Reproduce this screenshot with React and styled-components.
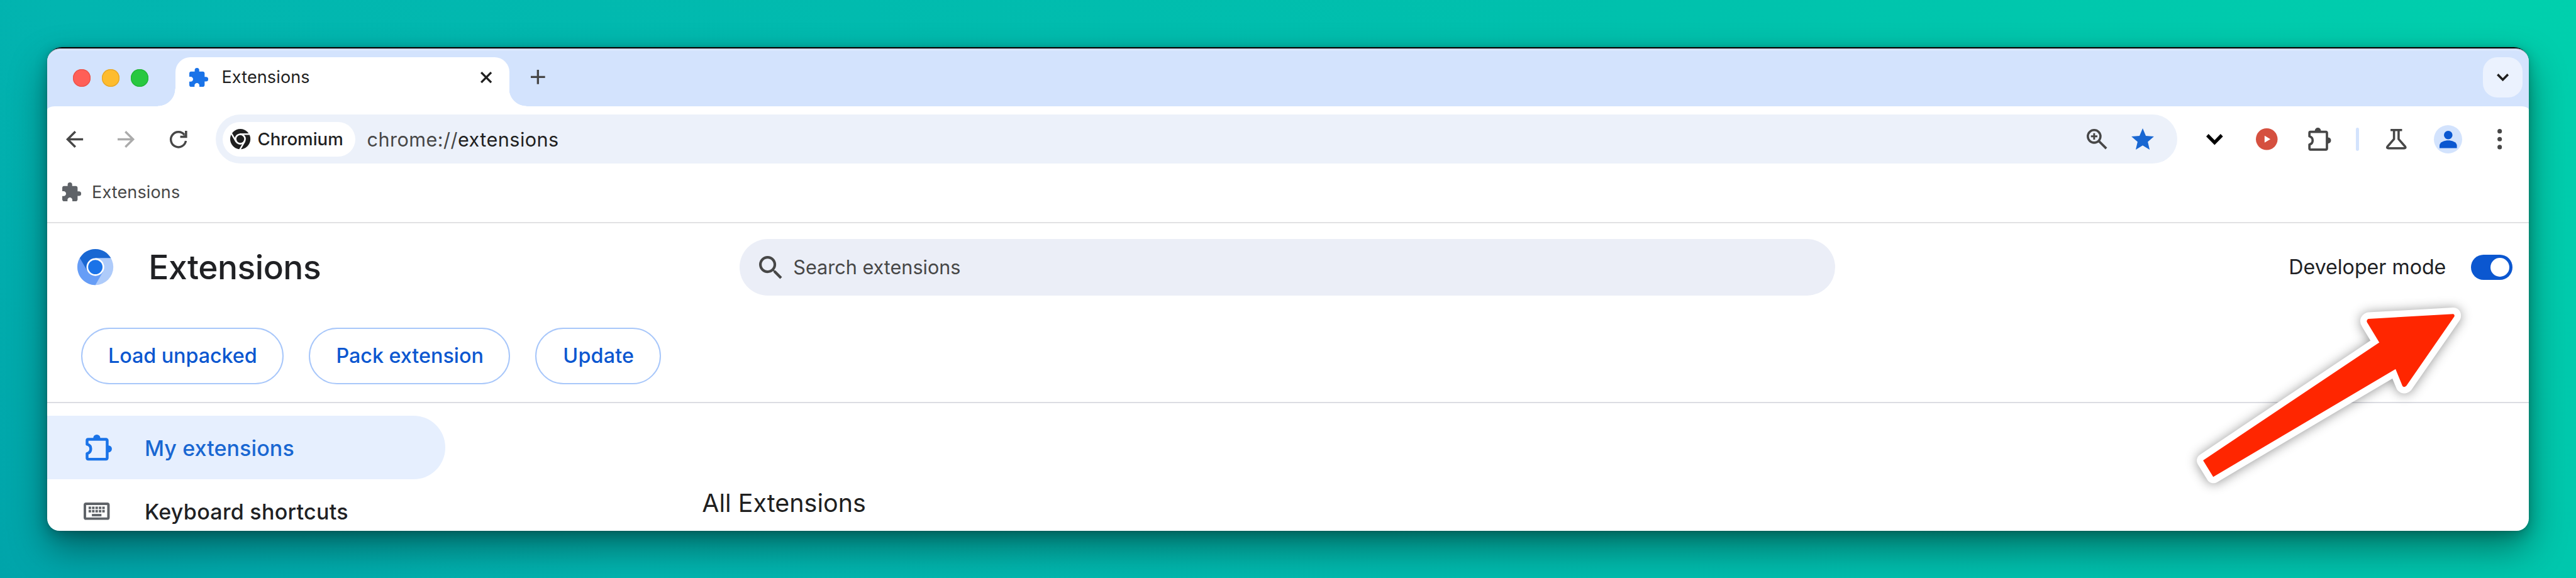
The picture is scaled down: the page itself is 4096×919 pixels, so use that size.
import React from "react";
import styled, { createGlobalStyle, css } from "styled-components";

const GlobalStyle = createGlobalStyle`
  *, *::before, *::after { box-sizing: border-box; }
  body {
    margin: 0;
    overflow: hidden;
    font-family: Inter, "Liberation Sans", sans-serif;
    color: #1f1f1f;
  }
  svg { display: block; flex: none; overflow: visible; }
`;

const Desktop = styled.main`
  zoom: 0.98652;
  width: 4152px;
  height: 932px;
  padding: 76px;
  overflow: hidden;
  background: linear-gradient(45deg, #00a4aa 0%, #02b5b0 20%, #00c1ad 70%, #00d0ad 100%);
`;

const BrowserWindow = styled.div`
  position: relative;
  display: flex;
  flex-direction: column;
  width: 4000px;
  height: 780px;
  padding-top: 2px;
  border-radius: 24px 24px 20px 20px;
  background: linear-gradient(#000 10px, #d3e3fd 10px, #d3e3fd 60px, #fff 60px);
  box-shadow:
    0 0 4px rgba(0, 0, 0, 0.2),
    0 6px 20px rgba(0, 0, 0, 0.22),
    0 28px 60px rgba(0, 0, 0, 0.4);
`;

const Label = styled.span`
  padding: 1.2px 0 0 ${(p) => (p.$joined ? 0 : 1.1)}px;
  font-size: ${(p) => p.$size}px;
  font-weight: ${(p) => p.$weight || 400};
  letter-spacing: ${(p) => p.$track || 0}px;
  line-height: 1.2;
  color: ${(p) => p.$color || "inherit"};
  white-space: pre;
`;

/* ---------- tab strip ---------- */

const TabStrip = styled.div`
  display: flex;
  flex: none;
  height: 93px;
  padding: 14px 9.7px 0 42px;
  border-radius: 21px 21px 0 0;
  background: #d3e3fd;
  box-shadow: inset 0 1.6px 0 rgba(150, 160, 190, 0.35), inset 0 3px 1px rgba(255, 255, 255, 0.35);
`;

const TrafficLights = styled.div`
  display: flex;
  gap: 18.4px;
  margin: 20px 44px 0 0;
`;

const Light = styled.span`
  width: 28px;
  height: 28px;
  border-radius: 50%;
  background: ${(p) => p.$fill};
  box-shadow: inset 0 0 0 1.2px ${(p) => p.$edge};
`;

const flare = css`
  content: "";
  position: absolute;
  bottom: 0;
  width: 28px;
  height: 28px;
`;

const Tab = styled.div`
  position: relative;
  display: flex;
  align-items: center;
  width: 538px;
  height: 79px;
  padding: 0 27.3px 15px 22px;
  border-radius: 24px 24px 0 0;
  background: #fff;
  &::before {
    ${flare}
    left: -28px;
    background: radial-gradient(circle at 0 0, transparent 27.5px, #fff 28.2px);
  }
  &::after {
    ${flare}
    right: -28px;
    background: radial-gradient(circle at 100% 0, transparent 27.5px, #fff 28.2px);
  }
  svg:first-child { margin: 2px 21px 0 0; }
  svg:last-child { margin: 2px 0 0 auto; }
`;

const NewTab = styled.div`
  margin: 20.8px 0 0 34.8px;
`;

const TabSearch = styled.div`
  display: flex;
  align-items: center;
  justify-content: center;
  width: 64.5px;
  height: 65px;
  margin-left: auto;
  border-radius: 23px;
  background: #ebf2fe;
`;

/* ---------- toolbar ---------- */

const ToolbarBack = styled.div`
  flex: none;
  background: #d3e3fd;
`;

const Toolbar = styled.div`
  display: flex;
  align-items: center;
  height: 107px;
  padding: 0 43px 0 30.5px;
  border-radius: 12px 12px 0 0 / 6px 6px 0 0;
  background: #fff;
`;

const NavIcons = styled.div`
  display: flex;
  align-items: center;
  gap: 56px;
  width: 241.5px;
`;

const Omnibox = styled.div`
  display: flex;
  align-items: center;
  width: 3161.5px;
  height: 79px;
  padding: 0 37.5px 0 11px;
  border-radius: 40px;
  background: #ecf1fa;
`;

const SiteChip = styled.div`
  display: flex;
  align-items: center;
  gap: 10.4px;
  width: 214px;
  height: 56px;
  margin-right: 17.5px;
  padding-left: 12px;
  border-radius: 28px;
  background: #fff;
`;

const OmniboxActions = styled.div`
  display: flex;
  align-items: center;
  gap: 39.5px;
  margin-left: auto;
`;

const ToolbarActions = styled.div`
  display: flex;
  align-items: center;
  margin-left: 46.5px;
`;

const Action = styled.span`
  margin-left: ${(p) => p.$before}px;
`;

const Divider = styled.span`
  width: 5px;
  height: 37px;
  margin-left: 39.5px;
  border-radius: 2.5px;
  background: #d3e3fd;
`;

const Avatar = styled.span`
  display: flex;
  align-items: center;
  justify-content: center;
  width: 46.5px;
  height: 46.5px;
  margin-left: 43.5px;
  border-radius: 50%;
  background: #d3e3fd;
`;

const BookmarksBar = styled.div`
  display: flex;
  align-items: center;
  flex: none;
  gap: 16.5px;
  height: 81.4px;
  padding: 0 0 16px 24px;
  border-bottom: 2.1px solid #e1e1e3;
`;

/* ---------- extensions page ---------- */

const PageHeader = styled.header`
  display: flex;
  align-items: center;
  flex: none;
  height: 142.5px;
  padding: 0 26px 0 48.5px;
`;

const Brand = styled.div`
  display: flex;
  align-items: center;
  gap: 56px;
  width: 1067.5px;
`;

const SearchField = styled.div`
  display: flex;
  align-items: center;
  gap: 17.5px;
  width: 1766px;
  height: 91px;
  padding-left: 31px;
  border-radius: 46px;
  background: #ebeef7;
`;

const DeveloperMode = styled.div`
  display: flex;
  align-items: center;
  gap: 40px;
  margin-left: auto;
`;

const Toggle = styled.span`
  display: flex;
  align-items: center;
  justify-content: flex-end;
  width: 67.5px;
  height: 41px;
  padding-right: 5px;
  border-radius: 21px;
  background: #0b57d0;
`;

const Knob = styled.span`
  width: 31px;
  height: 31px;
  border-radius: 50%;
  background: #fff;
`;

const ButtonRow = styled.div`
  display: flex;
  flex: none;
  gap: 40.5px;
  height: 148.4px;
  padding: 26px 0 0 54.5px;
  border-bottom: 2.1px solid #dcdde3;
`;

const OutlineButton = styled.button`
  width: ${(p) => p.$width}px;
  height: 91.5px;
  padding: 2.4px 0 0;
  border: 2.1px solid #a8c7fa;
  border-radius: 46px;
  background: transparent;
  color: #0b57d0;
  font: inherit;
`;

const PageBody = styled.div`
  display: flex;
  flex: 1;
  min-height: 0;
  padding-top: 20px;
  overflow: hidden;
  border-radius: 0 0 20px 20px;
`;

const SideNav = styled.nav`
  width: 1054.5px;
`;

const NavItem = styled.a`
  display: flex;
  align-items: center;
  width: 642px;
  height: 102.5px;
  border-radius: 0 51px 51px 0;
  background: ${(p) => (p.$active ? "#e6effe" : "transparent")};
  color: ${(p) => (p.$active ? "#1967d2" : "#202124")};
  span { padding-top: 2.6px; }
`;

const NavGlyph = styled.i`
  width: 156px;
  padding-left: ${(p) => p.$inset}px;
`;

const SectionTitle = styled.h2`
  margin: 117.5px 0 0;
  font-weight: 400;
  line-height: 48px;
`;

/* ---------- pointer arrow lying over the page ---------- */

const ArrowOverlay = styled.svg`
  position: absolute;
  left: 3464px;
  top: 419px;
  filter: drop-shadow(0 2px 9px rgba(0, 0, 0, 0.42));
`;

/* ---------- icons ---------- */

const PuzzleFilled = ({ size, color }) => (
  <svg width={size} height={size} viewBox="2 1 21 21" fill={color}>
    <path d="M20.5 11H19V7c0-1.1-.9-2-2-2h-4V3.5a2.5 2.5 0 0 0-5 0V5H4c-1.1 0-1.99.9-1.99 2v3.8H3.5c1.49 0 2.7 1.21 2.7 2.7s-1.21 2.7-2.7 2.7H2V20c0 1.1.9 2 2 2h3.8v-1.5c0-1.49 1.21-2.7 2.7-2.7s2.7 1.21 2.7 2.7V22H17c1.1 0 2-.9 2-2v-4h1.5a2.5 2.5 0 0 0 0-5z" />
  </svg>
);

const PuzzleOutline = ({ width, height, color, stroke }) => (
  <svg width={width} height={height} viewBox="0 0 37.5 37.5" preserveAspectRatio="none">
    <path
      d="M3.8 6.8h25.4a1.6 1.6 0 0 1 1.6 1.6v25.4a1.6 1.6 0 0 1-1.6 1.6H3.8a1.6 1.6 0 0 1-1.6-1.6v-6.6c7-1.8 7-11.4 0-13.2V8.4a1.6 1.6 0 0 1 1.6-1.6z"
      fill="none"
      stroke={color}
      strokeWidth={stroke}
      strokeLinejoin="round"
    />
    <path d="M11 6V5a5 5 0 0 1 10 0v1zM31.6 15.6h.9a5 5 0 0 1 0 10h-.9z" fill={color} />
  </svg>
);

const CloseIcon = () => (
  <svg width="18.5" height="18.5" viewBox="0 0 18.5 18.5" stroke="#1f1f1f" strokeWidth="3.4">
    <path d="M1.2 1.2l16.1 16.1M17.3 1.2L1.2 17.3" />
  </svg>
);

const PlusIcon = () => (
  <svg width="23" height="23" viewBox="0 0 23 23" stroke="#474747" strokeWidth="3.4">
    <path d="M11.5 0v23M0 11.5h23" />
  </svg>
);

const Chevron = ({ width, height, stroke, color }) => (
  <svg width={width} height={height} viewBox="0 0 20 12" preserveAspectRatio="none" fill="none">
    <path d="M1.4 1.4L10 9.8l8.6-8.4" stroke={color} strokeWidth={stroke} />
  </svg>
);

const BackArrow = ({ color, flip }) => (
  <svg width="27.5" height="27.5" viewBox="0 0 27.5 27.5" fill="none" stroke={color} strokeWidth="3.5">
    <g transform={flip ? "translate(27.5 0) scale(-1 1)" : undefined}>
      <path d="M27.5 13.75H3M15 1.3L2.5 13.75 15 26.2" />
    </g>
  </svg>
);

const ReloadIcon = () => (
  <svg width="28" height="28" viewBox="0 0 28 28">
    <path d="M25.9 16.2A12.2 12.2 0 1 1 23.6 6.6" fill="none" stroke="#474747" strokeWidth="3.5" />
    <path d="M24.4 0H28v11.3H16.8V7.8h4.6l3-1z" fill="#474747" />
  </svg>
);

const ChromeGlyph = () => (
  <svg width="32.6" height="32.6" viewBox="0 0 32.6 32.6">
    <circle cx="16.3" cy="16.3" r="16.3" fill="#1f1f1f" />
    <circle cx="16.3" cy="16.3" r="9" fill="#fff" />
    <circle cx="16.3" cy="16.3" r="6.3" fill="#1f1f1f" />
    {[0, 120, 240].map((deg) => (
      <path
        key={deg}
        d="M15.5 8.4H32"
        stroke="#fff"
        strokeWidth="2.4"
        transform={`rotate(${deg} 16.3 16.3)`}
      />
    ))}
  </svg>
);

const ChromiumLogo = () => (
  <svg width="58" height="58" viewBox="0 0 58 58">
    <circle cx="29" cy="29" r="29" fill="#aecbfa" />
    <path d="M3.9 14.5L16.44 36.25 29 29l12.56 7.25L29 58A29 29 0 0 1 3.9 14.5z" fill="#669df6" />
    <path d="M3.9 14.5a29 29 0 0 1 50.2 0H29V29l-12.56 7.25z" fill="#1967d2" />
    <circle cx="29" cy="29" r="14.3" fill="#fff" />
    <circle cx="29" cy="29" r="11.6" fill="#1a73e8" />
  </svg>
);

const ZoomIcon = () => (
  <svg width="33" height="33" viewBox="0 0 33 33" fill="none" stroke="#474747">
    <circle cx="12" cy="12" r="10.2" strokeWidth="3.6" />
    <path d="M19 19l12.6 12.6" strokeWidth="3.8" />
    <path d="M12 6.8v10.4M6.8 12h10.4" strokeWidth="3" />
  </svg>
);

const StarIcon = () => (
  <svg width="36.5" height="34.5" viewBox="2 2 20 19" fill="#1967d2">
    <path d="M12 17.27L18.18 21l-1.64-7.03L22 9.24l-7.19-.61L12 2 9.19 8.63 2 9.24l5.46 4.73L5.82 21z" />
  </svg>
);

const PlayBadge = () => (
  <svg width="35" height="35" viewBox="0 0 35 35">
    <circle cx="17.5" cy="17.5" r="17.5" fill="#d5503f" />
    <path d="M14 12l9.4 5.5L14 23z" fill="#fff" />
  </svg>
);

const FlaskIcon = () => (
  <svg width="33" height="33" viewBox="0 0 33 33" fill="none" stroke="#474747" strokeWidth="3.6">
    <path
      d="M7.2 1.8h18.6M12.8 1.8v14.6L2.3 28.4c-1.2 1.6-.4 2.8 1.3 2.8h25.8c1.7 0 2.5-1.2 1.3-2.8L20.2 16.4V1.8"
      strokeLinejoin="round"
    />
  </svg>
);

const PersonIcon = () => (
  <svg width="28" height="28" viewBox="0 0 28 28" fill="#0b57d0">
    <circle cx="14" cy="6.8" r="6.9" />
    <path d="M0 28v-4.3C0 18 8.6 15.4 14 15.4s14 2.6 14 8.3V28z" />
  </svg>
);

const MoreIcon = () => (
  <svg width="7.4" height="33" viewBox="0 0 7.4 33" fill="#474747">
    <circle cx="3.7" cy="3.7" r="3.6" />
    <circle cx="3.7" cy="16.5" r="3.6" />
    <circle cx="3.7" cy="29.3" r="3.6" />
  </svg>
);

const SearchIcon = () => (
  <svg width="37" height="37" viewBox="3 3 17.49 17.49" fill="#474747">
    <path d="M15.5 14h-.79l-.28-.27A6.471 6.471 0 0 0 16 9.5 6.5 6.5 0 1 0 9.5 16c1.61 0 3.09-.59 4.23-1.57l.27.28v.79l5 4.99L20.49 19l-4.99-5zm-6 0C7.01 14 5 11.99 5 9.5S7.01 5 9.5 5 14 7.01 14 9.5 11.99 14 9.5 14z" />
  </svg>
);

const KeyboardIcon = () => (
  <svg width="42" height="28" viewBox="0 0 42 28">
    <rect x="2" y="2" width="38" height="24" rx="2" fill="none" stroke="#5f6368" strokeWidth="4" />
    {[0, 1, 2, 3, 4].map((i) => (
      <g key={i} fill="#5f6368">
        <rect x={8 + i * 5.5} y="6.6" width="4" height="4" />
        <rect x={8 + i * 5.5} y="12" width="4" height="4" />
      </g>
    ))}
    <rect x="13.3" y="18.4" width="15.4" height="3.8" fill="#5f6368" />
  </svg>
);

const Arrow = () => {
  const shape =
    "M414.5 12.5L278 20.2Q274.6 22 277 25.4L296.5 57.6 12.5 247.7 27.9 272.6 321.9 98.7 333.5 127Q335.5 129 338 126.6L415 15.5Q416 13 414.5 12.5z";
  return (
    <ArrowOverlay width="430" height="290" viewBox="0 0 430 290">
      <path d={shape} fill="#fff" stroke="#fff" strokeWidth="23" strokeLinejoin="round" />
      <path d={shape} fill="#ff2600" stroke="#ff2600" strokeWidth="2" strokeLinejoin="round" />
    </ArrowOverlay>
  );
};

export default function App() {
  return (
    <Desktop>
      <GlobalStyle />
      <BrowserWindow>
        <TabStrip>
          <TrafficLights>
            <Light $fill="#ff5f57" $edge="#e9524a" />
            <Light $fill="#febc2e" $edge="#e5a425" />
            <Light $fill="#28c840" $edge="#22b437" />
          </TrafficLights>
          <Tab>
            <PuzzleFilled size={30.5} color="#1a73e8" />
            <Label $size={27.4} $track={0.12}>Extensions</Label>
            <CloseIcon />
          </Tab>
          <NewTab>
            <PlusIcon />
          </NewTab>
          <TabSearch>
            <Chevron width={19.5} height={12} stroke={3.6} color="#1f1f1f" />
          </TabSearch>
        </TabStrip>

        <ToolbarBack>
          <Toolbar>
            <NavIcons>
              <BackArrow color="#474747" />
              <BackArrow color="#ababab" flip />
              <ReloadIcon />
            </NavIcons>
            <Omnibox>
              <SiteChip>
                <ChromeGlyph />
                <Label $size={28} $weight={530}>Chromium</Label>
              </SiteChip>
              <Label $size={31} $track={0.46} $color="#474747">chrome://</Label>
              <Label $size={31} $track={0.46} $joined>extensions</Label>
              <OmniboxActions>
                <ZoomIcon />
                <StarIcon />
              </OmniboxActions>
            </Omnibox>
            <ToolbarActions>
              <Chevron width={27} height={17} stroke={4} color="#000" />
              <Action $before={53}>
                <PlayBadge />
              </Action>
              <Action $before={49.5}>
                <PuzzleOutline width={37} height={37.5} color="#474747" stroke={3.8} />
              </Action>
              <Divider />
              <Action $before={44}>
                <FlaskIcon />
              </Action>
              <Avatar>
                <PersonIcon />
              </Avatar>
              <Action $before={56}>
                <MoreIcon />
              </Action>
            </ToolbarActions>
          </Toolbar>
        </ToolbarBack>

        <BookmarksBar>
          <PuzzleFilled size={30.5} color="#5f6368" />
          <Label $size={27.4} $track={0.12} $color="#474747">Extensions</Label>
        </BookmarksBar>

        <PageHeader>
          <Brand>
            <ChromiumLogo />
            <Label $size={54} $weight={540} $track={-0.5} $color="#202124">Extensions</Label>
          </Brand>
          <SearchField>
            <SearchIcon />
            <Label $size={31} $color="#474747">Search extensions</Label>
          </SearchField>
          <DeveloperMode>
            <Label $size={32.6} $color="#202124">Developer mode</Label>
            <Toggle>
              <Knob />
            </Toggle>
          </DeveloperMode>
        </PageHeader>

        <ButtonRow>
          <OutlineButton $width={326.5}>
            <Label $size={32.8} $weight={550} $track={-0.08}>Load unpacked</Label>
          </OutlineButton>
          <OutlineButton $width={325}>
            <Label $size={32.8} $weight={550} $track={-0.04}>Pack extension</Label>
          </OutlineButton>
          <OutlineButton $width={202.5}>
            <Label $size={32.8} $weight={550} $track={0.15}>Update</Label>
          </OutlineButton>
        </ButtonRow>

        <PageBody>
          <SideNav>
            <NavItem $active>
              <NavGlyph $inset={61.5}>
                <PuzzleOutline width={42.5} height={42} color="#1a73e8" stroke={4} />
              </NavGlyph>
              <Label $size={34.5} $weight={540} $track={0.1}>My extensions</Label>
            </NavItem>
            <NavItem>
              <NavGlyph $inset={59}>
                <KeyboardIcon />
              </NavGlyph>
              <Label $size={34.5} $weight={540} $track={0.28}>Keyboard shortcuts</Label>
            </NavItem>
          </SideNav>
          <SectionTitle>
            <Label $size={40}>All Extensions</Label>
          </SectionTitle>
        </PageBody>

        <Arrow />
      </BrowserWindow>
    </Desktop>
  );
}
